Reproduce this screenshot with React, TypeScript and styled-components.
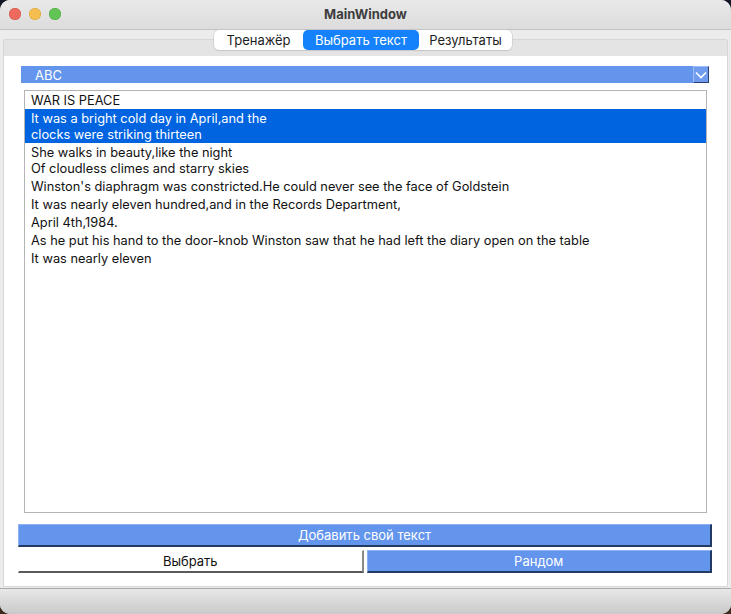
import React from "react";
import styled, { createGlobalStyle } from "styled-components";

const Global = createGlobalStyle`
  html, body {
    margin: 0;
    padding: 0;
    background: linear-gradient(180deg, #121726 0%, #1d1f28 60%, #3b2a1e 100%);
    width: 731px;
    height: 614px;
    overflow: hidden;
  }
  * { box-sizing: border-box; }
`;

const Window = styled.div`
  width: 731px;
  height: 614px;
  border-radius: 10px;
  overflow: hidden;
  display: flex;
  flex-direction: column;
  background: #ececec;
  font-family: Inter, "Liberation Sans", Arial, sans-serif;
  font-size: 13px;
`;

const TitleBar = styled.div`
  height: 30px;
  flex: none;
  display: flex;
  align-items: center;
  position: relative;
  background: linear-gradient(180deg, #e9e9e9 0%, #dcdcdc 100%);
  border-bottom: 1px solid #c2c2c2;
`;

const Lights = styled.div`
  display: flex;
  gap: 8px;
  padding-left: 9px;
  padding-bottom: 1px;
`;

const Light = styled.span<{ $c: string; $b: string }>`
  width: 12px;
  height: 12px;
  border-radius: 50%;
  background: ${(p) => p.$c};
  box-shadow: inset 0 0 0 0.5px ${(p) => p.$b};
`;

const Title = styled.div`
  position: absolute;
  left: 0;
  right: 0;
  top: 0;
  bottom: 0;
  display: flex;
  align-items: center;
  justify-content: center;
  font-weight: bold;
  font-size: 13px;
  color: #3d3d3d;
  padding-bottom: 1px;
  pointer-events: none;
`;

const Body = styled.div`
  flex: 1;
  display: flex;
  flex-direction: column;
  padding: 9px 3px 1px 3px;
  background: #ececec;
  position: relative;
`;

const TabBar = styled.div`
  position: absolute;
  top: 0;
  left: 214px;
  display: flex;
  height: 20px;
  background: #fff;
  border-radius: 5px;
  box-shadow: 0 0 0 0.5px #c8c8c8, 0 1px 1px rgba(0, 0, 0, 0.12);
  z-index: 2;
`;

const Tab = styled.div<{ $w: number; $active?: boolean }>`
  width: ${(p) => p.$w}px;
  height: 20px;
  display: flex;
  align-items: center;
  justify-content: center;
  border-radius: 5px;
  font-size: 13px;
  color: ${(p) => (p.$active ? "#ffffff" : "#1e1e1e")};
  background: ${(p) => (p.$active ? "#1582fb" : "transparent")};
`;

const Pane = styled.div`
  flex: 1;
  display: flex;
  flex-direction: column;
  border: 1px solid #d6d6d6;
  border-radius: 2px 2px 0 0;
  background: #e4e4e4;
  padding-top: 16px;
`;

const Content = styled.div`
  flex: 1;
  display: flex;
  flex-direction: column;
  background: #ffffff;
  padding: 10px 15px 13px 14px;
`;

const Combo = styled.div`
  height: 17px;
  margin: 0 3px 0 3px;
  background: #6495ed;
  display: flex;
  align-items: center;
  color: #ffffff;
  font-size: 13px;
  padding-left: 14px;
`;

const ComboText = styled.span`
  flex: 1;
`;

const ComboArrow = styled.div`
  width: 16px;
  height: 17px;
  display: flex;
  align-items: center;
  justify-content: center;
  background: #6f9cef;
  border-top: 1px solid #9dbcf5;
  border-left: 1px solid #9dbcf5;
  border-right: 1px solid #2b416c;
  border-bottom: 1px solid #2b416c;
`;

const List = styled.div`
  flex: 1;
  margin: 7px 5px 0 6px;
  border: 1px solid #b4b4b4;
  background: #ffffff;
  display: flex;
  flex-direction: column;
`;

const Item = styled.div<{ $selected?: boolean }>`
  padding: 2px 6px 0 6px;
  line-height: 16px;
  font-size: 12.8px;
  white-space: pre-line;
  background: ${(p) => (p.$selected ? "#0064e1" : "transparent")};
  color: ${(p) => (p.$selected ? "#ffffff" : "#111111")};
`;

const ButtonStack = styled.div`
  margin-top: 11px;
  display: flex;
  flex-direction: column;
  gap: 3px;
`;

const ButtonRow = styled.div`
  display: flex;
  gap: 3px;
`;

const Button = styled.div<{ $blue?: boolean }>`
  flex: 1;
  height: 23px;
  display: flex;
  align-items: center;
  justify-content: center;
  font-size: 13px;
  color: ${(p) => (p.$blue ? "#ffffff" : "#111111")};
  background: ${(p) => (p.$blue ? "#6495ed" : "#ffffff")};
  border-top: 1px solid ${(p) => (p.$blue ? "#8fb2f3" : "#ffffff")};
  border-left: 1px solid ${(p) => (p.$blue ? "#8fb2f3" : "#ffffff")};
  border-right: 2px solid ${(p) => (p.$blue ? "#233a63" : "#8a8a8a")};
  border-bottom: 2px solid ${(p) => (p.$blue ? "#233a63" : "#5a5a5a")};
`;

const StatusBar = styled.div`
  height: 26px;
  flex: none;
  border-top: 1px solid #a9a9a9;
  background: linear-gradient(180deg, #e8e8e8 0%, #c9c9c9 100%);
`;

const items: { text: string; selected?: boolean }[] = [
  { text: "WAR IS PEACE" },
  { text: "It was a bright cold day in April,and the\nclocks were striking thirteen", selected: true },
  { text: "She walks in beauty,like the night\nOf cloudless climes and starry skies" },
  { text: "Winston's diaphragm was constricted.He could never see the face of Goldstein" },
  { text: "It was nearly eleven hundred,and in the Records Department," },
  { text: "April 4th,1984." },
  { text: "As he put his hand to the door-knob Winston saw that he had left the diary open on the table" },
  { text: "It was nearly eleven" },
];

export default function App() {
  return (
    <>
      <Global />
      <Window>
        <TitleBar>
          <Lights>
            <Light $c="#ee6a5e" $b="#d0524a" />
            <Light $c="#f5bf4f" $b="#d6a243" />
            <Light $c="#61c454" $b="#4ea73f" />
          </Lights>
          <Title>MainWindow</Title>
        </TitleBar>
        <Body>
          <TabBar>
            <Tab $w={89}>Тренажёр</Tab>
            <Tab $w={116} $active>
              Выбрать текст
            </Tab>
            <Tab $w={93}>Результаты</Tab>
          </TabBar>
          <Pane>
            <Content>
              <Combo>
                <ComboText>ABC</ComboText>
                <ComboArrow>
                  <svg width="12" height="8" viewBox="0 0 12 8">
                    <path d="M1 1.5 L6 6.5 L11 1.5" fill="none" stroke="#ffffff" strokeWidth="1.6" />
                  </svg>
                </ComboArrow>
              </Combo>
              <List>
                {items.map((it, i) => (
                  <Item key={i} $selected={it.selected}>
                    {it.text}
                  </Item>
                ))}
              </List>
              <ButtonStack>
                <ButtonRow>
                  <Button $blue>Добавить свой текст</Button>
                </ButtonRow>
                <ButtonRow>
                  <Button>Выбрать</Button>
                  <Button $blue>Рандом</Button>
                </ButtonRow>
              </ButtonStack>
            </Content>
          </Pane>
        </Body>
        <StatusBar />
      </Window>
    </>
  );
}
